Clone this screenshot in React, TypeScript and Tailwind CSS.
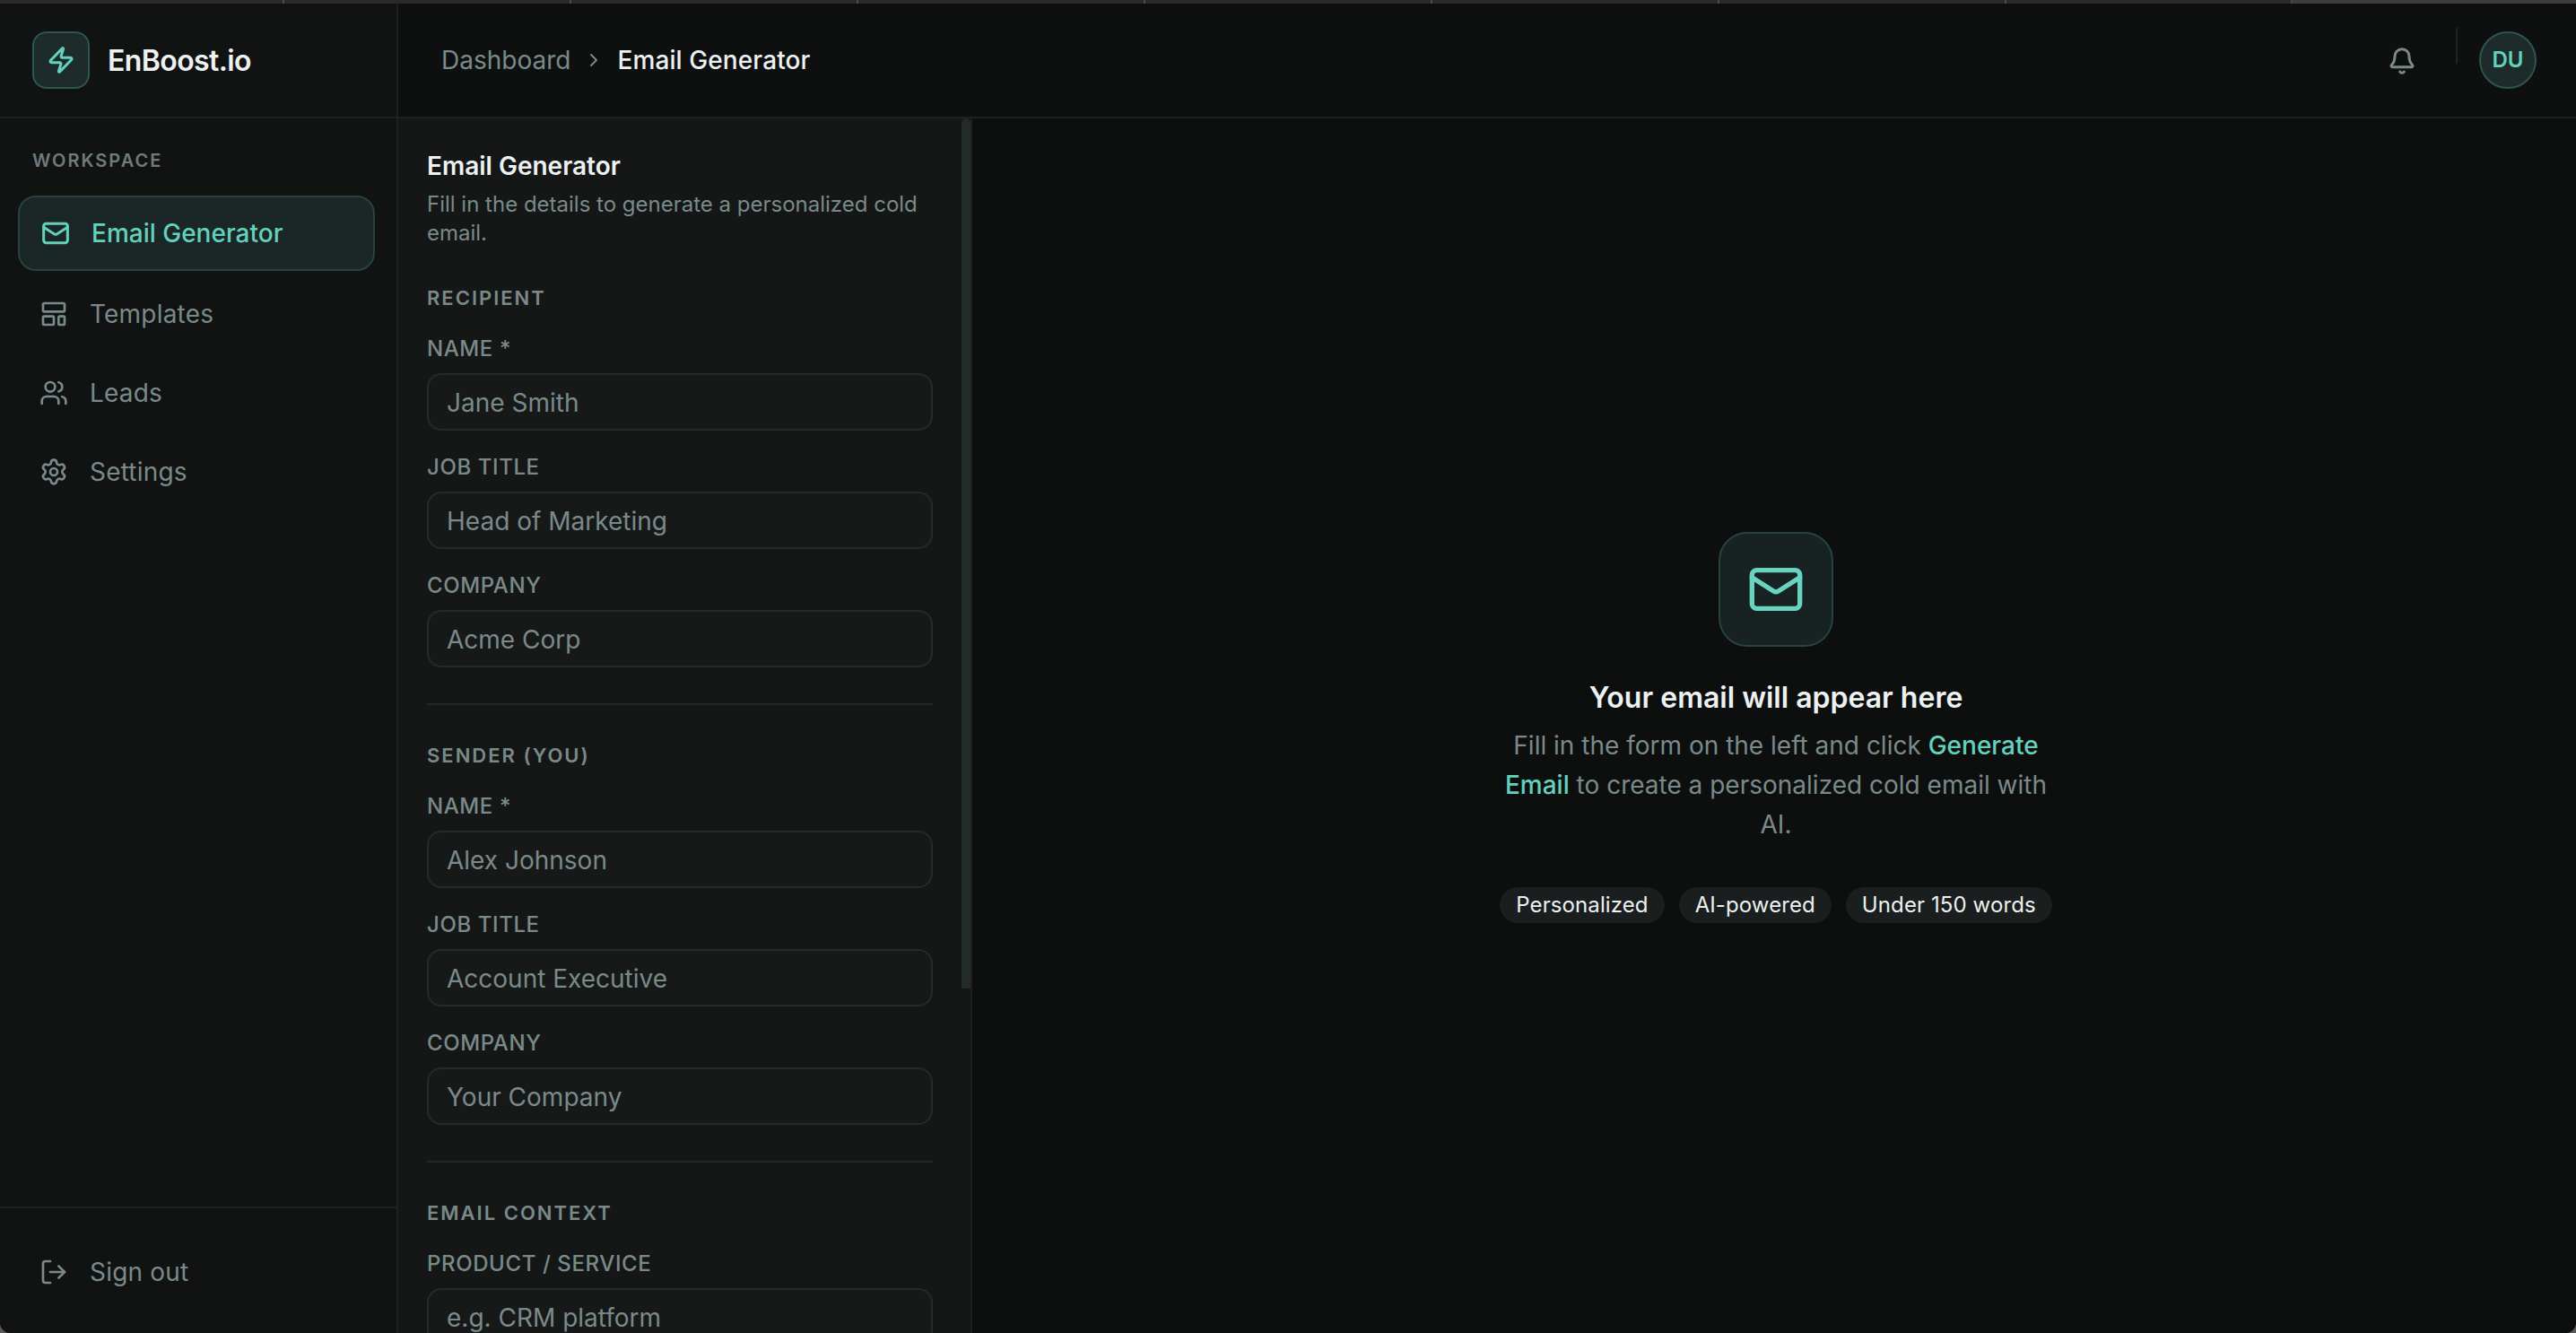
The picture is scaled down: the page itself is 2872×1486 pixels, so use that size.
import { Bell, ChevronRight, LayoutTemplate, LogOut, Mail, Settings, Users, Zap } from "lucide-react";

const font = { fontFamily: "Inter, 'Noto Sans', sans-serif" };

function Field({ label, placeholder }: { label: string; placeholder: string }) {
  return (
    <div className="flex flex-col">
      <label className="h-[30px] pt-[3px] mb-[14px] flex items-center text-[24px] font-medium tracking-[0.6px] text-[#7a8a8a] uppercase">{label}</label>
      <div className="h-[64px] shrink-0 flex items-center pt-[2px] px-[20px] rounded-[16px] border-2 border-[#252a2a] bg-[#171919] text-[28px] text-[#7a8a8a]">{placeholder}</div>
    </div>
  );
}

function Section({ title, fields }: { title: string; fields: [string, string][] }) {
  return (
    <section>
      <h3 className="h-[30px] flex items-center text-[22px] font-semibold tracking-[2px] text-[#7a8a8a] uppercase mb-[25px]">{title}</h3>
      <div className="flex flex-col gap-[24px]">
        {fields.map(([l, p]) => (
          <Field key={l} label={l} placeholder={p} />
        ))}
      </div>
    </section>
  );
}

function NavItem({ icon: Icon, label }: { icon: typeof Mail; label: string }) {
  return (
    <div className="h-[84px] flex items-center gap-[24px] px-[24px] rounded-[20px] text-[28px] tracking-[0.2px] text-[#7a8a8a]">
      <Icon size={32} strokeWidth={2} />
      <span>{label}</span>
    </div>
  );
}

export default function App() {
  return (
    <div style={font} className="w-[2872px] h-[1486px] overflow-hidden bg-[#5a5a5a]">
      <div className="w-full h-full overflow-hidden rounded-b-[12px] flex flex-col bg-[#0d0f0f]">
        <div className="h-[4px] shrink-0 flex bg-[#2a2a2a]">
          {[317, 320, 320, 320, 320, 320, 320, 319].map((w, i) => (
            <div key={i} style={{ width: w }} className="h-full border-r-2 border-[#4a4a4a]" />
          ))}
          <div className="flex-1 bg-[#3d3d3d]" />
        </div>
        <div className="flex-1 min-h-0 flex">
          <aside className="w-[444px] shrink-0 flex flex-col bg-[#111313] border-r-2 border-[#1d2121]">
            <div className="h-[128px] shrink-0 flex items-center gap-[20px] px-[36px] border-b-2 border-[#1d2121]">
              <div className="w-[64px] h-[64px] flex items-center justify-center rounded-[16px] bg-[#1d2b2b] border-2 border-[#2e5550] text-[#64d1bd]">
                <Zap size={32} strokeWidth={2.25} />
              </div>
              <span className="text-[32px] font-semibold text-[#edf1f1] tracking-[-0.6px] translate-y-[1px]">EnBoost.io</span>
            </div>
            <div className="flex-1 min-h-0 px-[20px] pt-[33px]">
              <div className="h-[28px] flex items-center px-[16px] text-[20px] font-semibold tracking-[2px] text-[#6f7c7c]">WORKSPACE</div>
              <nav className="mt-[25px] flex flex-col gap-[4px] w-[398px]">
                <div className="h-[84px] mb-[2px] flex items-center gap-[24px] px-[24px] rounded-[20px] bg-[#1b2626] border-2 border-[#27423f] text-[28px] font-medium text-[#64d1bd]">
                  <Mail size={32} strokeWidth={2.25} />
                  <span>Email Generator</span>
                </div>
                <NavItem icon={LayoutTemplate} label="Templates" />
                <NavItem icon={Users} label="Leads" />
                <NavItem icon={Settings} label="Settings" />
              </nav>
            </div>
            <div className="h-[141px] shrink-0 px-[20px] pt-[29px] border-t-2 border-[#1d2121]">
              <NavItem icon={LogOut} label="Sign out" />
            </div>
          </aside>
          <div className="flex-1 min-w-0 flex flex-col">
            <header className="h-[128px] shrink-0 flex items-center pl-[48px] pr-[44px] border-b-2 border-[#1d2121] bg-[#0e1010]">
              <span className="text-[28px] text-[#7a8a8a]">Dashboard</span>
              <ChevronRight size={24} strokeWidth={2} className="mx-[14px] text-[#7a8a8a]" />
              <span className="text-[28px] font-medium tracking-[0.1px] text-[#edf1f1]">Email Generator</span>
              <div className="ml-auto flex items-center">
                <Bell size={32} strokeWidth={2.25} className="text-[#7a8a8a] translate-y-[1px]" />
                <div className="w-[2px] h-[40px] ml-[44px] mr-[24px] mb-[32px] bg-[#1f2424]" />
                <div className="w-[64px] h-[64px] rounded-full flex items-center justify-center bg-[#1d2b2b] border-2 border-[#2e5550] text-[24px] font-semibold text-[#64d1bd]">DU</div>
              </div>
            </header>
            <div className="flex-1 min-h-0 flex">
              <div className="relative w-[640px] shrink-0 overflow-hidden bg-[#151717] border-r-2 border-[#1d2121]">
                <div className="absolute right-0 top-0 w-[10px] h-[970px] rounded-t-[6px] bg-[#232a2a]" />
                <div className="pl-[32px] pr-[42px] pt-[35px]">
                  <h2 className="text-[28px] leading-[36px] font-semibold text-[#edf1f1]">Email Generator</h2>
                  <p className="mt-[9px] text-[24px] leading-[32px] text-[#7a8a8a]">Fill in the details to generate a personalized cold email.</p>
                  <div className="mt-[41px]">
                    <Section title="Recipient" fields={[["Name *", "Jane Smith"], ["Job Title", "Head of Marketing"], ["Company", "Acme Corp"]]} />
                  </div>
                  <div className="h-[2px] bg-[#232828] mt-[40px] mb-[41px]" />
                  <Section title="Sender (You)" fields={[["Name *", "Alex Johnson"], ["Job Title", "Account Executive"], ["Company", "Your Company"]]} />
                  <div className="h-[2px] bg-[#232828] mt-[40px] mb-[41px]" />
                  <Section title="Email Context" fields={[["Product / Service", "e.g. CRM platform"]]} />
                </div>
              </div>
              <main className="flex-1 min-w-0 flex flex-col items-center pl-[4px] pt-[461px] bg-[#0d0f0f]">
                <div className="w-[128px] h-[128px] flex items-center justify-center rounded-[32px] bg-[#182222] border-2 border-[#27423f] text-[#68d3c0]">
                  <Mail size={64} strokeWidth={2} />
                </div>
                <h1 className="mt-[35px] text-[32px] leading-[44px] font-semibold text-[#edf1f1]">Your email will appear here</h1>
                <p className="mt-[9px] w-[640px] text-center text-[28px] leading-[44px] text-[#7a8a8a]">
                  Fill in the form on the left and click <span className="text-[#64d1bd] font-medium">Generate Email</span> to create a personalized cold email with AI.
                </p>
                <div className="mt-[48px] flex gap-[16px]">
                  {["Personalized", "AI-powered", "Under 150 words"].map((c) => (
                    <span key={c} className="h-[40px] flex items-center px-[18px] rounded-full bg-[#1a1e1e] text-[24px] tracking-[0.1px] text-[#edf1f1]">{c}</span>
                  ))}
                </div>
              </main>
            </div>
          </div>
        </div>
      </div>
    </div>
  );
}
